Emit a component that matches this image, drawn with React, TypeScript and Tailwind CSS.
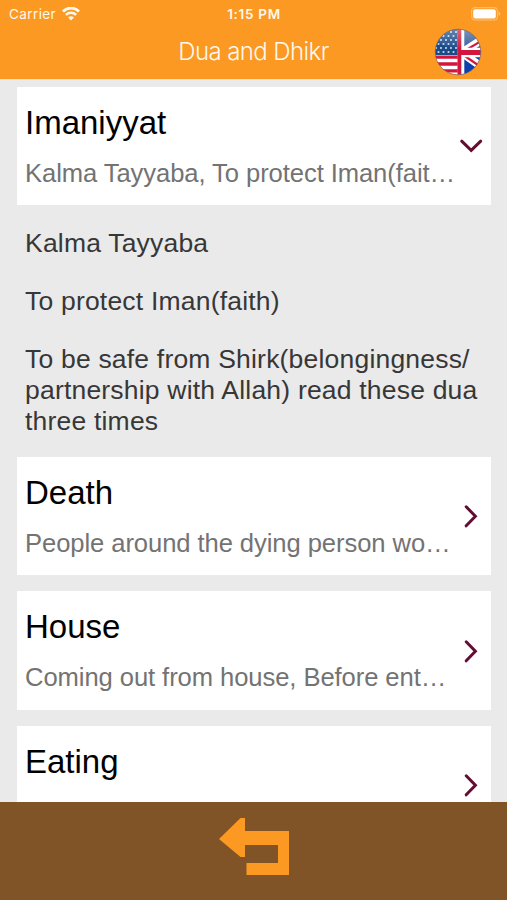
type Category = {
  title: string;
  summary: string;
  items?: string[][];
};

const categories: Category[] = [
  {
    title: "Imaniyyat",
    summary: "Kalma Tayyaba, To protect Iman(fait…",
    items: [
      ["Kalma Tayyaba"],
      ["To protect Iman(faith)"],
      [
        "To be safe from Shirk(belongingness/",
        "partnership with Allah) read these dua",
        "three times",
      ],
    ],
  },
  { title: "Death", summary: "People around the dying person wo…" },
  { title: "House", summary: "Coming out from house, Before ent…" },
  { title: "Eating", summary: "" },
];

function WifiIcon() {
  return (
    <svg width="18" height="14" viewBox="0 0 18 14" fill="none" stroke="#fff8ec">
      <path d="M1 4.4 A11.4 11.4 0 0 1 17 4.4" strokeWidth="2.8" />
      <path d="M3.9 7.8 A7.3 7.3 0 0 1 14.1 7.8" strokeWidth="2.5" />
      <path d="M9 13.6 L6.1 10.6 A4.2 4.2 0 0 1 11.9 10.6 Z" fill="#fff8ec" stroke="none" />
    </svg>
  );
}

function BatteryIcon() {
  return (
    <svg width="30" height="14" viewBox="0 0 30 14">
      <rect x="0.6" y="0.6" width="25.8" height="12.4" rx="3.4" fill="none" stroke="#fdbf76" strokeWidth="1.1" />
      <rect x="2.2" y="2.2" width="22.6" height="9.2" rx="2" fill="#fff" />
      <path d="M27.6 4.6 Q29.4 5.2 29.4 6.8 Q29.4 8.4 27.6 9 Z" fill="#fdbf76" />
    </svg>
  );
}

const stars = [4, 8, 12, 16, 20, 24].flatMap((y, row) =>
  [2, 7, 12, 17, 22].map((x) => ({ x: x + (row % 2 ? 2.5 : 0), y }))
);

function FlagIcon() {
  return (
    <svg width="48" height="48" viewBox="0 0 48 48">
      <defs>
        <clipPath id="disc">
          <circle cx="24" cy="24" r="22.8" />
        </clipPath>
        <clipPath id="right">
          <rect x="24" y="0" width="24" height="48" />
        </clipPath>
        <linearGradient id="gloss" x1="0" y1="0" x2="0" y2="1">
          <stop offset="0" stopColor="#fff" stopOpacity="0.45" />
          <stop offset="1" stopColor="#fff" stopOpacity="0.02" />
        </linearGradient>
      </defs>
      <g clipPath="url(#disc)">
        <rect width="48" height="48" fill="#fff" />
        <rect width="25" height="27" fill="#1b4a88" />
        {stars.map((s) => (
          <circle key={`${s.x}-${s.y}`} cx={s.x} cy={s.y} r="1.05" fill="#c9dcee" />
        ))}
        <path d="M0 29.2H25M0 36H25M0 42.8H25" stroke="#d5163c" strokeWidth="3.3" />
        <g clipPath="url(#right)">
          <rect x="24" width="24" height="24" fill="#3a5f9c" />
          <rect x="24" y="24" width="24" height="24" fill="#0f3fa8" />
          <path d="M24 27L52 9M24 22L52 42" stroke="#fff" strokeWidth="8" />
          <path d="M28 24.5L52 10M28 26L52 42.5" stroke="#d5163c" strokeWidth="2.3" />
          <path d="M24 24.5H48" stroke="#fff" strokeWidth="9.6" />
        </g>
        <path d="M27 0V48" stroke="#fff" strokeWidth="6.6" />
        <path d="M25.4 0V48" stroke="#d5163c" strokeWidth="3.8" />
        <path d="M25 24.5H48" stroke="#d5163c" strokeWidth="5.2" />
        <ellipse cx="24" cy="7" rx="24" ry="13" fill="url(#gloss)" />
      </g>
      <circle cx="24" cy="24" r="22.8" fill="none" stroke="#6e584d" strokeOpacity="0.7" strokeWidth="0.9" />
    </svg>
  );
}

function Chevron({ open }: { open: boolean }) {
  return (
    <svg
      className="shrink-0"
      width="24"
      height="24"
      viewBox="0 0 24 24"
      fill="none"
      stroke="#640d33"
      strokeWidth="3"
      strokeLinecap="round"
    >
      {open ? <path d="M2.7 7.2L12.2 16.4L21.7 7.2" /> : <path d="M7.2 2.8L16.4 12.3L7.2 21.8" />}
    </svg>
  );
}

function CategoryCard({ category }: { category: Category }) {
  return (
    <section>
      <div className="flex h-[118.4px] items-center bg-white px-2">
        <div className="h-full min-w-0 flex-1 whitespace-nowrap">
          <h2 className="pt-[16.7px] text-[33px] leading-[38px] text-black">{category.title}</h2>
          <p className="pt-4 text-[25.6px] leading-[31px] tracking-[-0.08px] text-[#737373]">
            {category.summary}
          </p>
        </div>
        <Chevron open={!!category.items} />
      </div>
      {category.items && (
        <ul className="flex flex-col gap-[27px] pt-[22.2px] pb-[4.5px] pl-2 text-[26.5px] leading-[31px] tracking-[0.2px] text-[#373737]">
          {category.items.map((lines) => (
            <li key={lines[0]}>
              {lines.map((line) => (
                <span key={line} className="block whitespace-nowrap">
                  {line}
                </span>
              ))}
            </li>
          ))}
        </ul>
      )}
    </section>
  );
}

export default function App() {
  return (
    <div className="flex h-[900px] w-[507px] flex-col overflow-hidden bg-[#eaeaea] font-['Liberation_Sans',sans-serif]">
      <header className="h-20 shrink-0 border-b border-[#f8dfc0] bg-[#fb9923] font-['Inter',sans-serif] text-[#fff8ec]">
        <div className="grid h-7 grid-cols-[1fr_auto_1fr] items-center pr-1.5 pl-[7px] text-[13.5px]">
          <div className="flex items-center gap-1.5 pl-0.5 tracking-[0.4px]">
            <span>Carrier</span>
            <WifiIcon />
          </div>
          <span className="text-center font-semibold tracking-[0.7px]">1:15 PM</span>
          <div className="flex justify-end">
            <BatteryIcon />
          </div>
        </div>
        <div className="grid h-12 grid-cols-[1fr_auto_1fr] items-center">
          <h1 className="col-start-2 text-2xl font-[350] tracking-[-0.6px]">Dua and Dhikr</h1>
          <button className="mr-[25px] justify-self-end">
            <FlagIcon />
          </button>
        </div>
      </header>

      <main className="flex min-h-0 flex-1 flex-col gap-4 overflow-hidden pt-[7px] pr-4 pl-[17px]">
        {categories.map((category) => (
          <CategoryCard key={category.title} category={category} />
        ))}
      </main>

      <footer className="flex h-[98px] shrink-0 justify-center bg-[#805426] pt-4">
        <button className="h-[58px]">
          <svg width="70" height="58" viewBox="0 0 70 58" fill="#fb9923">
            <path d="M0 21L21.5 0H26V13H70V57H27.5V45H59V27H26V39H21.5Z" />
          </svg>
        </button>
      </footer>
    </div>
  );
}
